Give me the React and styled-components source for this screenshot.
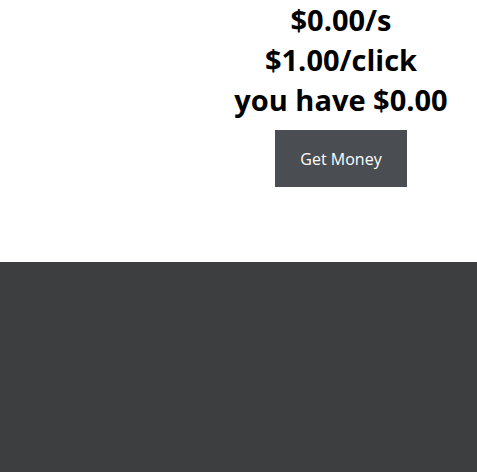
import React from "react";
import styled, { createGlobalStyle } from "styled-components";

const Global = createGlobalStyle`
  html, body { margin: 0; padding: 0; background: #ffffff; }
  body { font-family: "Open Sans", "Noto Sans", sans-serif; }
`;

const Page = styled.div`
  display: flex;
  flex-direction: column;
  min-height: 472px;
`;

const Top = styled.section`
  height: 262px;
  display: flex;
  background: #ffffff;
`;

const Spacer = styled.div`
  width: 205px;
  flex-shrink: 0;
`;

const Column = styled.div`
  flex: 1;
  display: flex;
  flex-direction: column;
  align-items: center;
`;

const Stat = styled.div`
  font-size: 29px;
  font-weight: 700;
  line-height: 40px;
  color: #000;
  white-space: nowrap;
`;

const Button = styled.button`
  margin-top: 10px;
  width: 132px;
  height: 57px;
  border: none;
  background: #4a4d52;
  color: #ffffff;
  font-family: "Open Sans", "Noto Sans", sans-serif;
  font-size: 16px;
  cursor: pointer;
`;

const Bottom = styled.section`
  flex: 1;
  background: #3d3e40;
`;

export default function App() {
  return (
    <Page>
      <Global />
      <Top>
        <Spacer />
        <Column>
          <Stat>$0.00/s</Stat>
          <Stat>$1.00/click</Stat>
          <Stat>you have $0.00</Stat>
          <Button>Get Money</Button>
        </Column>
      </Top>
      <Bottom />
    </Page>
  );
}
